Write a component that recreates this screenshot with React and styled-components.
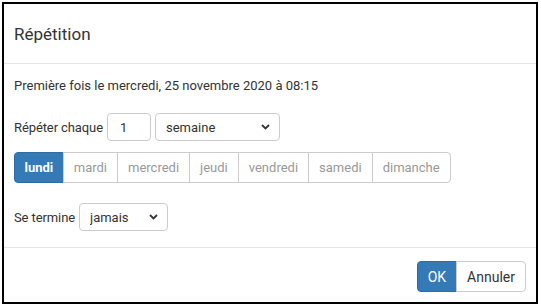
import React from "react";
import styled, { createGlobalStyle } from "styled-components";

const Global = createGlobalStyle`
    html, body {
        margin: 0;
        padding: 0;
        background: #fff;
    }
    body {
        font-family: Roboto, "Liberation Sans", Arial, sans-serif;
        font-size: 13px;
        color: #333;
    }
    #root {
        padding: 2px;
    }
`;

const Dialog = styled.div`
    box-sizing: border-box;
    width: 536px;
    height: 302px;
    border: 2px solid #000;
    background: #fff;
    display: flex;
    flex-direction: column;
`;

const Header = styled.div`
    height: 59px;
    display: flex;
    align-items: center;
    padding: 0 10px;
    border-bottom: 1px solid #e5e5e5;
`;

const Title = styled.h4`
    margin: 0;
    font-size: 17px;
    font-weight: 400;
    color: #333;
`;

const Body = styled.div`
    flex: 1;
    padding: 12px 10px 0;
    display: flex;
    flex-direction: column;
`;

const Line = styled.div`
    line-height: 20px;
    height: 20px;
`;

const Row = styled.div`
    display: flex;
    align-items: center;
    gap: 4px;
    margin-top: ${(p) => p.$top}px;
`;

const Label = styled.span`
    white-space: nowrap;
    letter-spacing: -0.1px;
`;

const NumberInput = styled.input`
    box-sizing: border-box;
    width: 44px;
    height: 28px;
    border: 1px solid #ccc;
    border-radius: 4px;
    padding: 0 12px;
    font: inherit;
    color: #333;
    outline: none;
`;

const SelectWrap = styled.div`
    position: relative;
    width: ${(p) => p.$w}px;
    height: 28px;
`;

const Select = styled.select`
    box-sizing: border-box;
    width: 100%;
    height: 100%;
    appearance: none;
    border: 1px solid #ccc;
    border-radius: 4px;
    background: #fff;
    padding: 0 10px;
    font: inherit;
    color: #333;
    outline: none;
`;

const Chevron = styled.svg`
    position: absolute;
    right: 10px;
    top: 11px;
    pointer-events: none;
`;

const Group = styled.div`
    display: flex;
    align-self: flex-start;
    margin-top: 11px;
`;

const Day = styled.button`
    height: 31px;
    padding: 0 ${(p) => (p.$active ? 9.5 : 10)}px;
    border: 1px solid ${(p) => (p.$active ? "#2e6da4" : "#ccc")};
    margin-left: -1px;
    background: ${(p) => (p.$active ? "#337ab7" : "#fff")};
    color: ${(p) => (p.$active ? "#fff" : "#999")};
    font: inherit;
    font-weight: ${(p) => (p.$active ? 700 : 400)};
    border-radius: 0;
    &:first-child {
        margin-left: 0;
        border-radius: 4px 0 0 4px;
    }
    &:last-child {
        border-radius: 0 4px 4px 0;
    }
`;

const Footer = styled.div`
    display: flex;
    justify-content: flex-end;
    padding: 13px 10px 10px;
    border-top: 1px solid #e5e5e5;
`;

const Button = styled.button`
    height: 31px;
    padding: 0 ${(p) => p.$pad}px;
    font: inherit;
    font-size: 14px;
    border: 1px solid ${(p) => (p.$primary ? "#2e6da4" : "#ccc")};
    background: ${(p) => (p.$primary ? "#337ab7" : "#fff")};
    color: ${(p) => (p.$primary ? "#fff" : "#333")};
    border-radius: ${(p) => (p.$primary ? "4px 0 0 4px" : "0 4px 4px 0")};
    margin-left: ${(p) => (p.$primary ? 0 : -1)}px;
`;

const Down = () => (
    <Chevron width="9" height="6" viewBox="0 0 9 6">
        <path d="M1 1l3.5 3.5L8 1" fill="none" stroke="#333" strokeWidth="1.8" />
    </Chevron>
);

const days = ["lundi", "mardi", "mercredi", "jeudi", "vendredi", "samedi", "dimanche"];

const App = () => {
    return (
        <>
            <Global />
            <Dialog>
                <Header>
                    <Title>Répétition</Title>
                </Header>
                <Body>
                    <Line>Première fois le mercredi, 25 novembre 2020 à 08:15</Line>
                    <Row $top={17}>
                        <Label>Répéter chaque</Label>
                        <NumberInput defaultValue="1" />
                        <SelectWrap $w={125}>
                            <Select defaultValue="semaine">
                                <option>jour</option>
                                <option>semaine</option>
                                <option>mois</option>
                                <option>année</option>
                            </Select>
                            <Down />
                        </SelectWrap>
                    </Row>
                    <Group>
                        {days.map((d, i) => (
                            <Day key={d} $active={i === 0}>{d}</Day>
                        ))}
                    </Group>
                    <Row $top={20}>
                        <Label>Se termine</Label>
                        <SelectWrap $w={89}>
                            <Select defaultValue="jamais">
                                <option>jamais</option>
                                <option>après</option>
                                <option>le</option>
                            </Select>
                            <Down />
                        </SelectWrap>
                    </Row>
                </Body>
                <Footer>
                    <Button $primary $pad={10}>OK</Button>
                    <Button $pad={10}>Annuler</Button>
                </Footer>
            </Dialog>
        </>
    );
};

export default App;
